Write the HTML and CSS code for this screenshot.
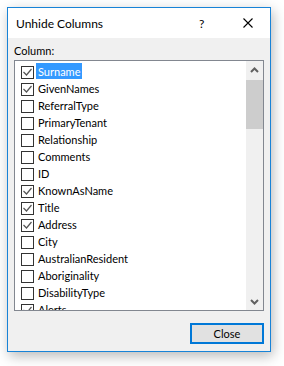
FILE: index.html
```html
<!DOCTYPE html>
<html>
<head>
<meta charset="utf-8">
<link rel="stylesheet" href="styles.css">
</head>
<body>
<div class="win">
  <div class="titlebar">
    <span class="title">Unhide Columns</span>
    <span class="help">?</span>
    <svg class="close-x" width="10" height="10" viewBox="0 0 10 10"><path d="M0.5 0.5 L9.5 9.5 M9.5 0.5 L0.5 9.5" stroke="#000" stroke-width="1.1" fill="none"/></svg>
  </div>
  <div class="content">
    <div class="label">Column:</div>
    <div class="list">
      <div class="items">
        <div class="row"><span class="cb"><svg viewBox="0 0 11 11" width="11" height="11"><path d="M1.5 5 L4.5 8 L9.5 2" stroke="#555" stroke-width="1.2" fill="none"/></svg></span><span class="txt sel">Surname</span></div>
        <div class="row"><span class="cb"><svg viewBox="0 0 11 11" width="11" height="11"><path d="M1.5 5 L4.5 8 L9.5 2" stroke="#555" stroke-width="1.2" fill="none"/></svg></span><span class="txt">GivenNames</span></div>
        <div class="row"><span class="cb"></span><span class="txt">ReferralType</span></div>
        <div class="row"><span class="cb"></span><span class="txt">PrimaryTenant</span></div>
        <div class="row"><span class="cb"></span><span class="txt">Relationship</span></div>
        <div class="row"><span class="cb"></span><span class="txt">Comments</span></div>
        <div class="row"><span class="cb"></span><span class="txt">ID</span></div>
        <div class="row"><span class="cb"><svg viewBox="0 0 11 11" width="11" height="11"><path d="M1.5 5 L4.5 8 L9.5 2" stroke="#555" stroke-width="1.2" fill="none"/></svg></span><span class="txt">KnownAsName</span></div>
        <div class="row"><span class="cb"><svg viewBox="0 0 11 11" width="11" height="11"><path d="M1.5 5 L4.5 8 L9.5 2" stroke="#555" stroke-width="1.2" fill="none"/></svg></span><span class="txt">Title</span></div>
        <div class="row"><span class="cb"><svg viewBox="0 0 11 11" width="11" height="11"><path d="M1.5 5 L4.5 8 L9.5 2" stroke="#555" stroke-width="1.2" fill="none"/></svg></span><span class="txt">Address</span></div>
        <div class="row"><span class="cb"></span><span class="txt">City</span></div>
        <div class="row"><span class="cb"></span><span class="txt">AustralianResident</span></div>
        <div class="row"><span class="cb"></span><span class="txt">Aboriginality</span></div>
        <div class="row"><span class="cb"></span><span class="txt">DisabilityType</span></div>
        <div class="row"><span class="cb"><svg viewBox="0 0 11 11" width="11" height="11"><path d="M1.5 5 L4.5 8 L9.5 2" stroke="#555" stroke-width="1.2" fill="none"/></svg></span><span class="txt">Alerts</span></div>
      </div>
      <div class="scrollbar">
        <div class="arrow"><svg width="9" height="6" viewBox="0 0 9 6"><path d="M1 5 L4.5 1.5 L8 5" stroke="#606060" stroke-width="2" fill="none"/></svg></div>
        <div class="track"><div class="thumb"></div></div>
        <div class="arrow"><svg width="9" height="6" viewBox="0 0 9 6"><path d="M1 1 L4.5 4.5 L8 1" stroke="#606060" stroke-width="2" fill="none"/></svg></div>
      </div>
    </div>
    <div class="buttons">
      <button class="btn">Close</button>
    </div>
  </div>
</div>
</body>
</html>
```

FILE: styles.css
```css
html, body {
  margin: 0;
  padding: 0;
  background: #ffffff;
}
body {
  font-family: Lato, "Noto Sans", sans-serif;
  font-size: 11px;
  color: #000;
  padding: 7px 0 0 7px;
  height: 366px;
  box-sizing: border-box;
  overflow: hidden;
}
.win {
  width: 264px;
  height: 345px;
  box-sizing: border-box;
  border: 1px solid #1883d7;
  background: #f0f0f0;
  box-shadow: 2px 4px 12px rgba(0, 0, 0, 0.28);
  display: flex;
  flex-direction: column;
}
.titlebar {
  height: 30px;
  background: #fff;
  display: flex;
  align-items: center;
  padding-left: 8px;
  flex: none;
}
.title {
  font-size: 12px;
  flex: 1;
}
.help {
  font-size: 12px;
  width: 6px;
  margin-right: 38px;
}
.close-x {
  margin-right: 17px;
  margin-top: -1px;
}
.content {
  flex: 1;
  padding: 7px 6px 7px 6px;
  display: flex;
  flex-direction: column;
}
.label {
  height: 15px;
  line-height: 12px;
}
.list {
  height: 251px;
  box-sizing: border-box;
  border: 1px solid #828790;
  background: #fff;
  display: flex;
  overflow: hidden;
}
.items {
  flex: 1;
  padding: 2px 0 0 6px;
  overflow: hidden;
}
.row {
  height: 17px;
  display: flex;
  align-items: flex-start;
}
.cb {
  width: 13px;
  height: 13px;
  box-sizing: border-box;
  border: 1px solid #333;
  background: #fff;
  margin-top: 3px;
  margin-right: 2px;
  flex: none;
  display: flex;
}
.cb svg {
  display: block;
}
.txt {
  height: 16px;
  box-sizing: border-box;
  line-height: 14px;
  padding: 2px 2px 0 2px;
  white-space: nowrap;
}
.txt.sel {
  background: #3399ff;
  color: #fff;
}
.scrollbar {
  width: 17px;
  background: #f0f0f0;
  display: flex;
  flex-direction: column;
  flex: none;
}
.arrow {
  height: 17px;
  display: flex;
  align-items: center;
  justify-content: center;
  flex: none;
}
.track {
  flex: 1;
  padding-top: 2px;
}
.thumb {
  height: 49px;
  background: #cdcdcd;
}
.buttons {
  display: flex;
  justify-content: flex-end;
  margin-top: 12px;
}
.btn {
  width: 74px;
  height: 21px;
  box-sizing: border-box;
  border: 2px solid #0078d7;
  background: #e1e1e1;
  font-family: Lato, "Noto Sans", sans-serif;
  font-size: 11px;
  color: #000;
  padding: 0;
}
```
